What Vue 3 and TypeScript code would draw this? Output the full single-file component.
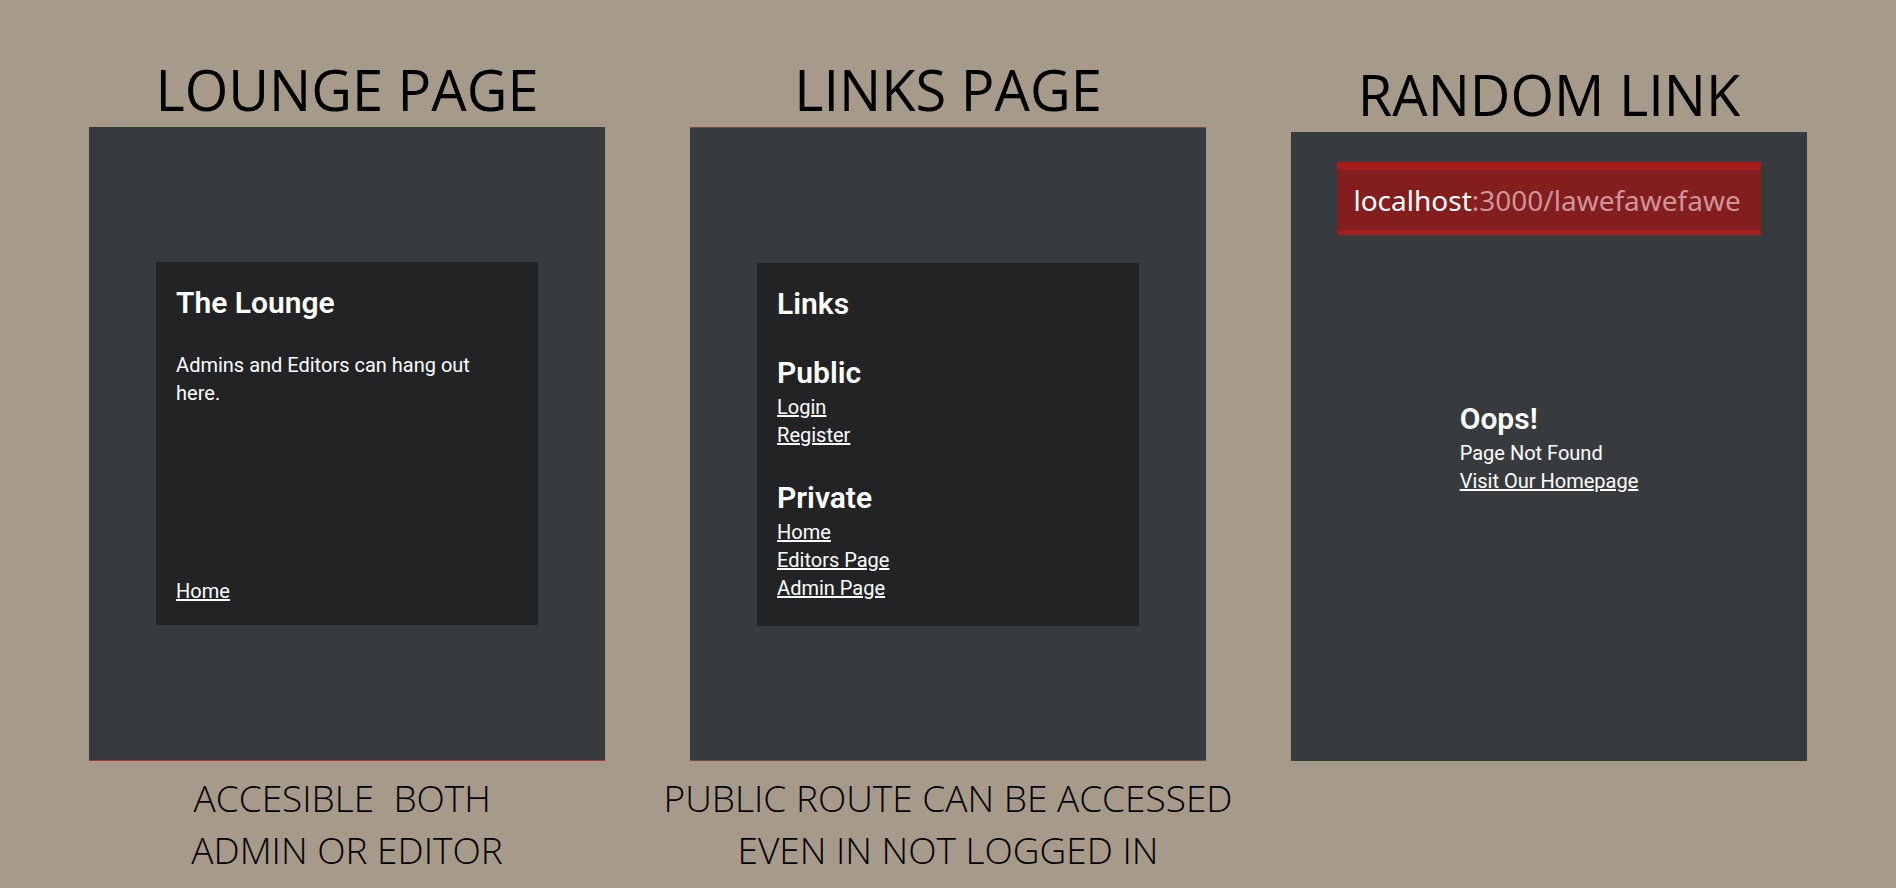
<script setup lang="ts">
interface Caption {
  id: string
  lines: string[]
}

const captions: Caption[] = [
  { id: 'lounge', lines: ['ACCESIBLE  BOTH ', 'ADMIN OR EDITOR'] },
  { id: 'links', lines: ['PUBLIC ROUTE CAN BE ACCESSED', 'EVEN IN NOT LOGGED IN'] },
]

const publicLinks: string[] = ['Login', 'Register']
const privateLinks: string[] = ['Home', 'Editors Page', 'Admin Page']
</script>

<template>
  <main class="board">
    <section class="column">
      <h1 class="title">LOUNGE PAGE</h1>
      <div class="screen screen-lounge">
        <article class="card">
          <h2>The Lounge</h2>
          <p class="spaced">Admins and Editors can hang out here.</p>
          <a class="bottom" href="#">Home</a>
        </article>
      </div>
    </section>

    <section class="column">
      <h1 class="title">LINKS PAGE</h1>
      <div class="screen screen-links">
        <article class="card">
          <h2>Links</h2>
          <h2 class="spaced">Public</h2>
          <a v-for="name in publicLinks" :key="name" href="#">{{ name }}</a>
          <h2 class="spaced">Private</h2>
          <a v-for="name in privateLinks" :key="name" href="#">{{ name }}</a>
        </article>
      </div>
    </section>

    <section class="column column-low">
      <h1 class="title">RANDOM LINK</h1>
      <div class="screen screen-missing">
        <div class="address"><span class="host">localhost</span>:3000/lawefawefawe</div>
        <article class="message">
          <h2>Oops!</h2>
          <p>Page Not Found</p>
          <a href="#">Visit Our Homepage</a>
        </article>
      </div>
    </section>

    <div v-for="caption in captions" :key="caption.id" class="caption">
      <span v-for="line in caption.lines" :key="line">{{ line }}</span>
    </div>
  </main>
</template>

<style>
body {
  margin: 0;
  background: #a69a8b;
}
</style>

<style scoped>
.board {
  box-sizing: border-box;
  min-height: 100vh;
  padding: 51px 89px 12px;
  display: grid;
  grid-template-columns: repeat(3, minmax(0, 1fr));
  grid-template-rows: 1fr auto;
  column-gap: 85px;
  row-gap: 11px;
  overflow: hidden;
  background: #a69a8b;
  color: #000;
  font-family: "Open Sans", "Noto Sans", sans-serif;
}

.column {
  display: flex;
  flex-direction: column;
}

.column-low {
  padding-top: 5px;
}

.title {
  margin: 0;
  font-size: 56px;
  font-weight: 400;
  line-height: 76px;
  text-align: center;
  white-space: nowrap;
}

.screen {
  box-sizing: border-box;
  flex: 1;
  display: grid;
  background: #383b3e;
  color: #fff;
  font-family: Roboto, "Open Sans", sans-serif;
  font-size: 20px;
  line-height: 28px;
}

.screen-lounge,
.screen-links {
  place-items: center;
  grid-template-columns: 74%;
  justify-content: center;
}

.screen-lounge {
  border-bottom: 1px solid #b8302f;
}

.screen-links {
  border-top: 1px solid #804644;
  border-bottom: 1px solid #804644;
}

.card {
  box-sizing: border-box;
  width: 100%;
  min-height: 363px;
  padding: 20px;
  display: flex;
  flex-direction: column;
  align-items: flex-start;
  background: #222325;
}

h2 {
  margin: 0;
  font-size: 30px;
  font-weight: 600;
  line-height: 41px;
}

p {
  margin: 0;
}

a {
  color: #fff;
  text-decoration: underline;
}

.spaced {
  margin-top: 28px;
}

.bottom {
  margin-top: auto;
}

.screen-missing {
  grid-template-rows: 1fr auto 1fr;
  justify-items: center;
}

.address {
  box-sizing: border-box;
  width: 82%;
  margin-top: 30px;
  padding: 0 16px;
  align-self: start;
  border-top: 8px solid #a61c1d;
  border-bottom: 5px solid #a61c1d;
  background: #831d1e;
  color: #cf9595;
  font-family: "Noto Sans", "Open Sans", sans-serif;
  font-size: 28px;
  line-height: 60px;
  white-space: nowrap;
}

.host {
  color: #fff;
}

.message {
  display: flex;
  flex-direction: column;
  align-items: flex-start;
}

.caption {
  display: flex;
  flex-direction: column;
  align-items: center;
  font-size: 37px;
  font-weight: 300;
  line-height: 52px;
  white-space: pre;
}
</style>
